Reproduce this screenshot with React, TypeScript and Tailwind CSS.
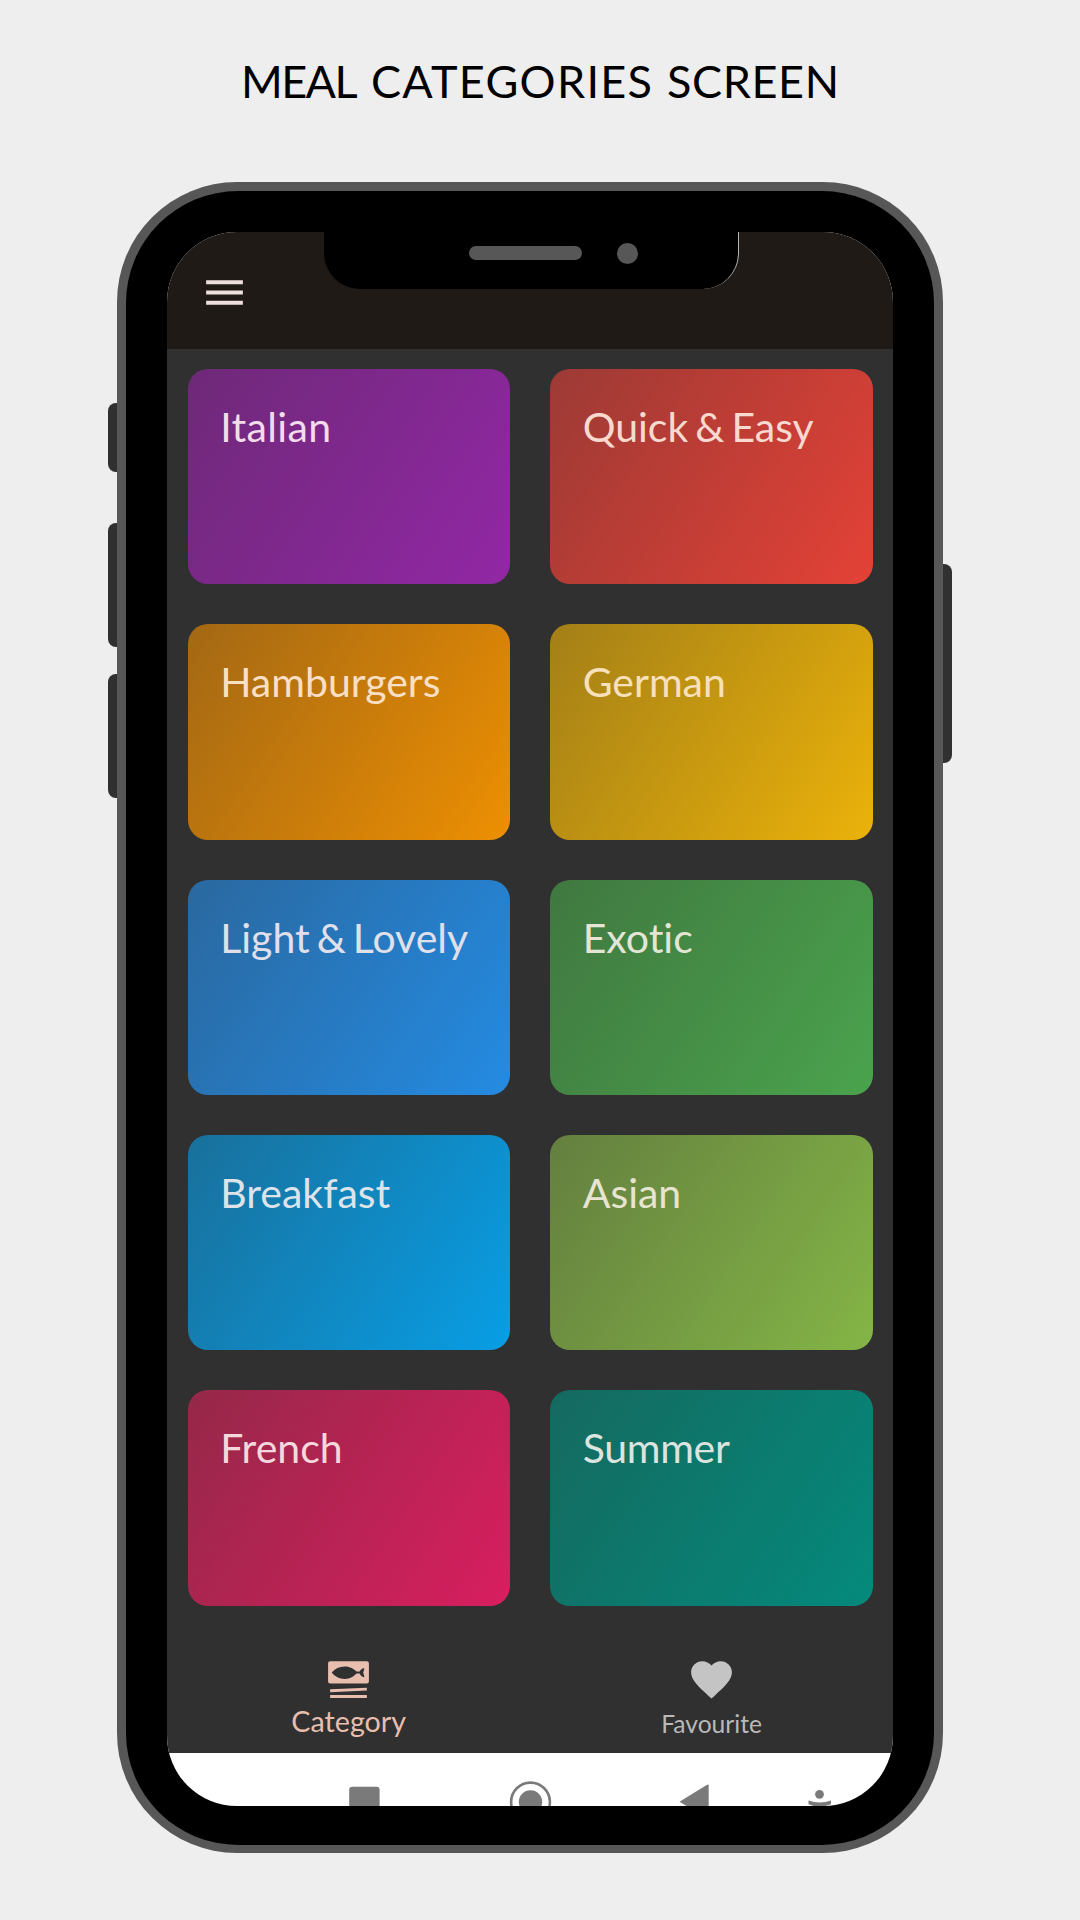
import { MdFavorite, MdMenu } from "react-icons/md";

const categories = [
  { name: "Italian", tint: "bg-[linear-gradient(123.7deg,#6e2978,#9227a5)] tracking-[0.35px] text-[#f3dcea]" },
  { name: "Quick & Easy", tint: "bg-[linear-gradient(123.7deg,#9c3a35,#e44136)] text-[#f7d9d0]" },
  { name: "Hamburgers", tint: "bg-[linear-gradient(123.7deg,#a36814,#ed8f02)] text-[#f9dfc4]" },
  { name: "German", tint: "bg-[linear-gradient(123.7deg,#a37f17,#ebb20a)] text-[#f7e0bc]" },
  { name: "Light & Lovely", tint: "bg-[linear-gradient(123.7deg,#2a689f,#248be2)] text-[#e0e0ea]" },
  { name: "Exotic", tint: "bg-[linear-gradient(123.7deg,#407840,#4aa34d)] text-[#e5e5d5]" },
  { name: "Breakfast", tint: "bg-[linear-gradient(123.7deg,#19709b,#089ee5)] text-[#dce4ea]" },
  { name: "Asian", tint: "bg-[linear-gradient(123.7deg,#647f3f,#84b546)] text-[#e8e4d2]" },
  { name: "French", tint: "bg-[linear-gradient(123.7deg,#952849,#d91e5f)] text-[#f5d8de]" },
  { name: "Summer", tint: "bg-[linear-gradient(123.7deg,#15695f,#048a7c)] tracking-[-0.3px] text-[#dbe4df]" },
];

function FishPlateIcon() {
  return (
    <svg className="size-[49px]" viewBox="0 0 24 24" fill="currentColor">
      <path
        fillRule="evenodd"
        d="M3 3H21Q22 3 22 4V13Q22 14 21 14H3Q2 14 2 13V4Q2 3 3 3ZM3.8 8.6C5.3 6.6 7.6 5.6 10.2 5.6C12.8 5.6 14.6 6.8 15.9 8.1L17.5 8.1C17.8 7.4 18.4 6.7 19.4 6.5L19.8 6.6L19.2 8.6L19.8 10.8L19.4 10.9C18.4 10.6 17.8 9.9 17.5 9.1L15.9 9.1C14.6 10.5 12.8 11.7 10.2 11.7C7.6 11.7 5.3 10.6 3.8 8.6Z"
      />
      <path d="M3 16.8 21 16.1V17.4L3 18.2ZM3 19.6H21V21H3Z" />
    </svg>
  );
}

function SystemBar() {
  return (
    <svg className="block h-[53px] w-[726px] shrink-0" viewBox="167 1752.7 726 53" fill="#7a7a7a">
      <rect x="349.2" y="1786.5" width="30.4" height="30" rx="3" />
      <circle cx="530.5" cy="1801.7" r="11.7" />
      <circle cx="530.5" cy="1801.7" r="19.4" fill="none" stroke="#7a7a7a" strokeWidth="2.6" />
      <path d="M679.5 1801.5 707.5 1784.3Q708.7 1784 708.7 1785.5V1819Z" />
      <circle cx="819.5" cy="1794" r="4.4" />
      <path d="M808.5 1800.3Q819.5 1804 831 1800.3V1804L826 1805.5V1810H813V1805.5L808.5 1804Z" />
    </svg>
  );
}

function Notch() {
  return (
    <div className="absolute top-0 left-[157px] flex h-[57px] w-[414.5px] rounded-b-[36px] border-r border-[#b5b5b5] bg-black pt-3.5 pl-[145px]">
      <div className="h-3.5 w-[113px] rounded-full bg-[#575757]" />
      <div className="-mt-[3px] ml-[35px] size-[21px] rounded-full bg-[#575757]" />
    </div>
  );
}

export default function App() {
  return (
    <main className="flex h-[1920px] w-[1080px] flex-col overflow-hidden bg-[#eeeeee] font-['Lato',sans-serif]">
      <h1 className="flex h-[182.3px] shrink-0 pt-[54px] pl-[241px] text-[45px] leading-[54px] text-black">
        <span className="w-[130px] tracking-[-1.6px]">MEAL</span>
        <span className="w-[296px] tracking-[1.3px]">CATEGORIES</span>
        <span className="tracking-[0.6px]">SCREEN</span>
      </h1>

      <div className="relative ml-[117px] h-[1670.7px] w-[826px] shrink-0">
        <div className="absolute top-[220.7px] -left-[9px] h-[69px] w-5 rounded-l-lg bg-[#303030]" />
        <div className="absolute top-[341px] -left-[9px] h-[124px] w-5 rounded-l-lg bg-[#303030]" />
        <div className="absolute top-[491.7px] -left-[9px] h-[124.5px] w-5 rounded-l-lg bg-[#303030]" />
        <div className="absolute top-[382px] -right-[9px] h-[199px] w-5 rounded-r-lg bg-[#303030]" />

        <div className="relative h-full rounded-[120px] bg-[#575757] px-[8.7px] pt-[8.5px] pb-[8px]">
          <div className="h-full rounded-[112px] bg-black px-[41.6px] pt-[41.2px] pb-[39.3px]">
            <div className="relative flex h-[1573.7px] w-[725.7px] flex-col overflow-hidden rounded-[70px] bg-white">
              <header className="h-[117px] shrink-0 bg-[#201a17] pt-[36.5px] pl-[32.7px]">
                <MdMenu className="size-[49px] text-[#eddfdb]" />
              </header>
              <Notch />

              <section className="grid shrink-0 grid-cols-2 gap-x-[40px] gap-y-[39.8px] bg-[#303030] px-[20.4px] pt-5">
                {categories.map((c) => (
                  <div
                    key={c.name}
                    className={`h-[215.5px] rounded-[20px] pt-[33px] pl-[32.5px] text-[41px] leading-[50px] [font-variant-ligatures:none] [word-spacing:-3.5px] whitespace-nowrap ${c.tint}`}
                  >
                    {c.name}
                  </div>
                ))}
              </section>

              <nav className="grid flex-1 grid-cols-2 bg-[#303030] pt-[49px]">
                <div className="flex flex-col items-center text-[#e8beaf]">
                  <FishPlateIcon />
                  <span className="text-[28.7px] leading-[34px]">Category</span>
                </div>
                <div className="flex flex-col items-center text-[#b9b9b9]">
                  <MdFavorite className="size-[49px] text-[#c4c4c4]" />
                  <span className="pt-[3px] text-[24.6px] leading-[34px]">Favourite</span>
                </div>
              </nav>
              <SystemBar />
            </div>
          </div>
        </div>
      </div>
    </main>
  );
}
